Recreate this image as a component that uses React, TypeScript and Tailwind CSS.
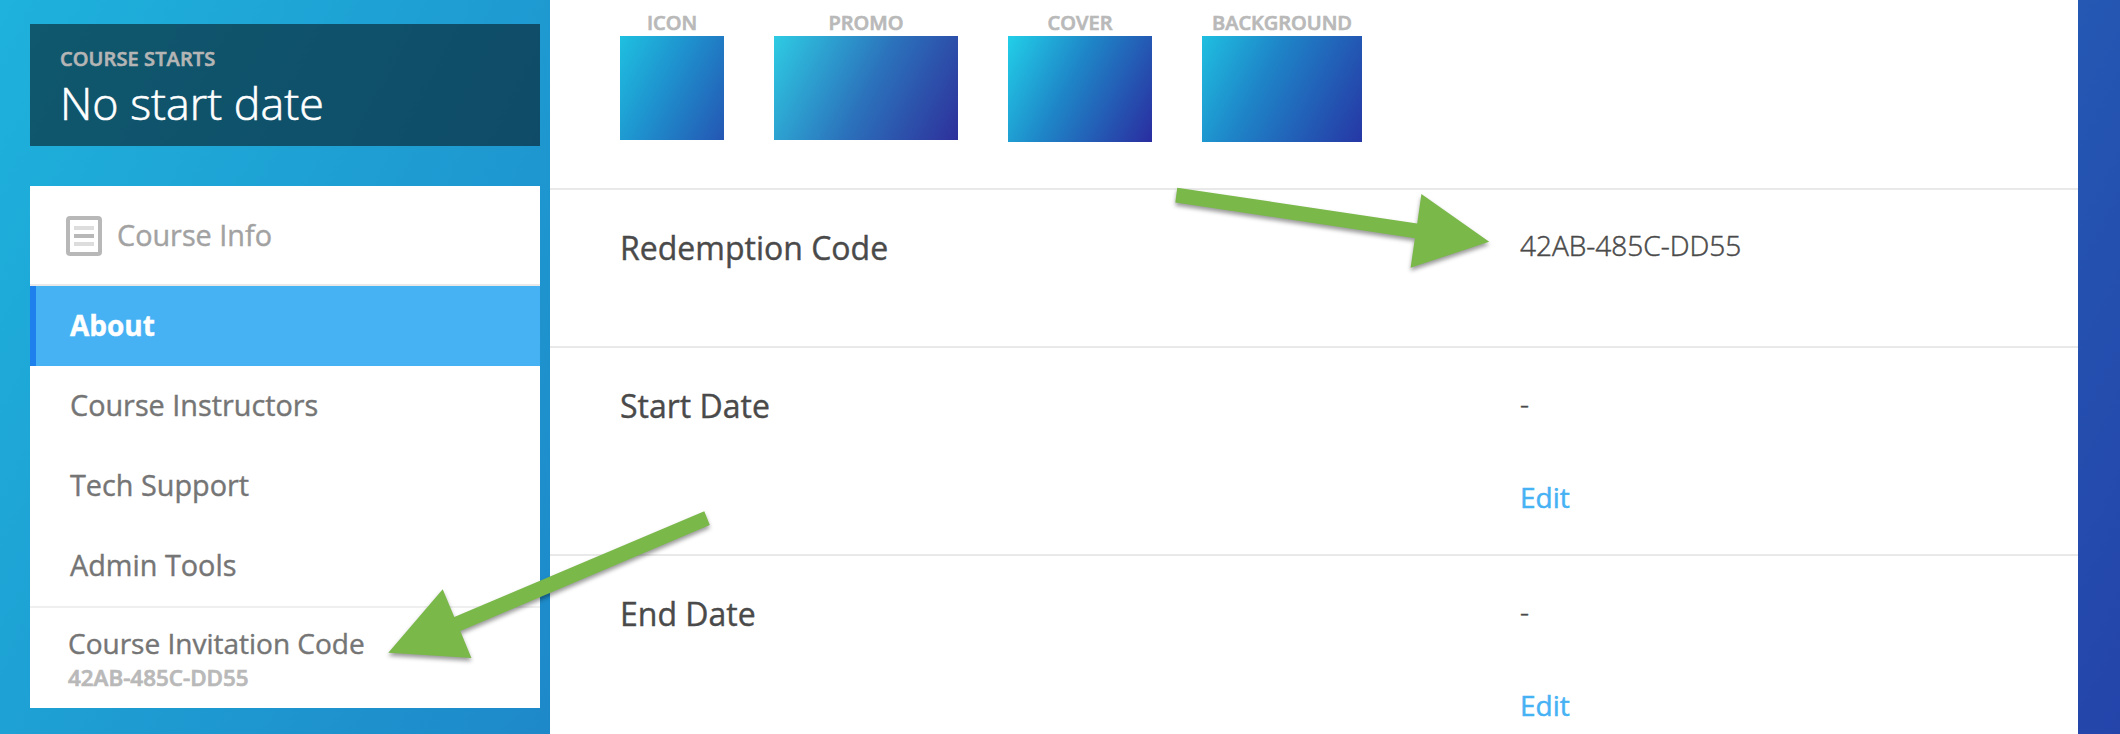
import type { ReactNode } from "react";

const NAV_ITEMS = ["Course Instructors", "Tech Support", "Admin Tools"];

function DocumentIcon() {
  return (
    <svg className="mt-0.5 h-10 w-9 shrink-0" viewBox="0 0 36 40" fill="none">
      <rect x="2" y="2" width="32" height="36" rx="2" stroke="#b8b8b8" strokeWidth="4" />
      <path d="M8 12H28M8 28H28" stroke="#dddddd" strokeWidth="4" />
      <path d="M8 20H28" stroke="#b8b8b8" strokeWidth="4" />
    </svg>
  );
}

function Thumb({ label, className }: { label: string; className: string }) {
  return (
    <figure className="flex flex-col items-center">
      <figcaption className="flex h-[27px] w-0 justify-center text-[20px] leading-7 font-semibold whitespace-nowrap text-[#b9b9b9] [-webkit-text-stroke:0.7px_#b9b9b9]">
        {label}
      </figcaption>
      <div className={className} />
    </figure>
  );
}

function Row({ label, children, className }: { label: string; children: ReactNode; className: string }) {
  return (
    <section className={`flex shrink-0 border-t-2 border-[#e9e9e9] pl-[70px] text-[#4a4a4a] ${className}`}>
      <h2 className="w-[900px] pt-[38px] text-[32px] leading-10 [-webkit-text-stroke:0.4px]">{label}</h2>
      <div className="flex flex-col items-start gap-[54px] pt-[35px] text-[28px] leading-10 [-webkit-text-stroke:0.5px]">
        {children}
      </div>
    </section>
  );
}

function Sidebar() {
  return (
    <aside className="flex w-[510px] shrink-0 flex-col gap-10 pt-6">
      <div className="h-[122px] bg-black/50 pt-[21px] pl-[30px]">
        <p className="text-[20px] leading-7 font-semibold tracking-[0.1px] text-[#b5b5b5] [-webkit-text-stroke:0.6px]">
          COURSE STARTS
        </p>
        <p className="mt-1 text-[44.8px] leading-[52px] font-light text-white [-webkit-text-stroke:0.6px]">
          No start date
        </p>
      </div>
      <nav className="h-[522px] bg-white text-[28.8px] text-[#757575] [-webkit-text-stroke:0.4px]">
        <div className="flex h-[100px] items-center gap-[15px] border-b-2 border-[#e9e9e9] pl-9 text-[#a2a2a2]">
          <DocumentIcon />
          <span className="pb-px">Course Info</span>
        </div>
        <div className="flex h-20 items-center border-l-[6px] border-[#1e80ed] bg-[#46b2f4] pb-0.5 pl-[34px] text-[28px] font-bold text-white">
          About
        </div>
        {NAV_ITEMS.map((item) => (
          <div key={item} className="flex h-20 items-center pb-0.5 pl-10">
            {item}
          </div>
        ))}
        <div className="border-t-2 border-[#efefef] pt-[15px] pl-[38px]">
          <p className="text-[28px] leading-10">Course Invitation Code</p>
          <p className="pt-px text-[22.4px] leading-7 font-semibold text-[#b9b9b9] [-webkit-text-stroke:0.7px]">
            42AB-485C-DD55
          </p>
        </div>
      </nav>
    </aside>
  );
}

function Arrows() {
  return (
    <svg
      className="pointer-events-none absolute inset-0 h-[734px] w-[2120px] drop-shadow-[0_3px_2px_rgba(0,0,0,0.4)]"
      viewBox="0 0 2120 734"
      fill="#7ab84a"
    >
      <polygon points="1177.2,187.7 1175.3,202.4 1414.9,238.2 1410.6,267.8 1489.2,241.7 1421.4,194 1417.2,223.4" />
      <polygon points="704.3,511.2 709.8,525 460.3,631 471.4,658 388.3,652.8 442.7,589.3 454.3,617" />
    </svg>
  );
}

export default function App() {
  return (
    <div className="relative flex h-[734px] w-[2120px] gap-2.5 overflow-hidden bg-[linear-gradient(118deg,#1eb2dc_0%,#1e9ad1_22%,#1e89c9_37%,#2458b3_83%,#2444aa_100%)] pl-[30px] font-['Open_Sans',sans-serif]">
      <Sidebar />
      <main className="flex w-[1528px] shrink-0 flex-col bg-white">
        <div className="flex h-[188px] shrink-0 gap-[50px] pt-[9px] pl-[70px]">
          <Thumb label="ICON" className="h-[104px] w-[104px] bg-[linear-gradient(118deg,#1fc0e0,#1e94cf_42%,#2456b3)]" />
          <Thumb label="PROMO" className="h-[104px] w-[184px] bg-[linear-gradient(118deg,#2ecbe3,#2b71bb_52%,#2e309b)]" />
          <Thumb label="COVER" className="h-[106px] w-[144px] bg-[linear-gradient(118deg,#22cfe8,#1e87c8_42%,#2a2da0)]" />
          <Thumb label="BACKGROUND" className="h-[106px] w-[160px] bg-[linear-gradient(118deg,#1fbfe0,#1e85c8_38%,#2637a5)]" />
        </div>
        <Row label="Redemption Code" className="h-[158px]">
          <span className="font-light">42AB-485C-DD55</span>
        </Row>
        <Row label="Start Date" className="h-[208px]">
          <span className="font-light">-</span>
          <a className="text-[#46b2f4]">Edit</a>
        </Row>
        <Row label="End Date" className="h-[208px]">
          <span className="font-light">-</span>
          <a className="text-[#46b2f4]">Edit</a>
        </Row>
      </main>
      <Arrows />
    </div>
  );
}
